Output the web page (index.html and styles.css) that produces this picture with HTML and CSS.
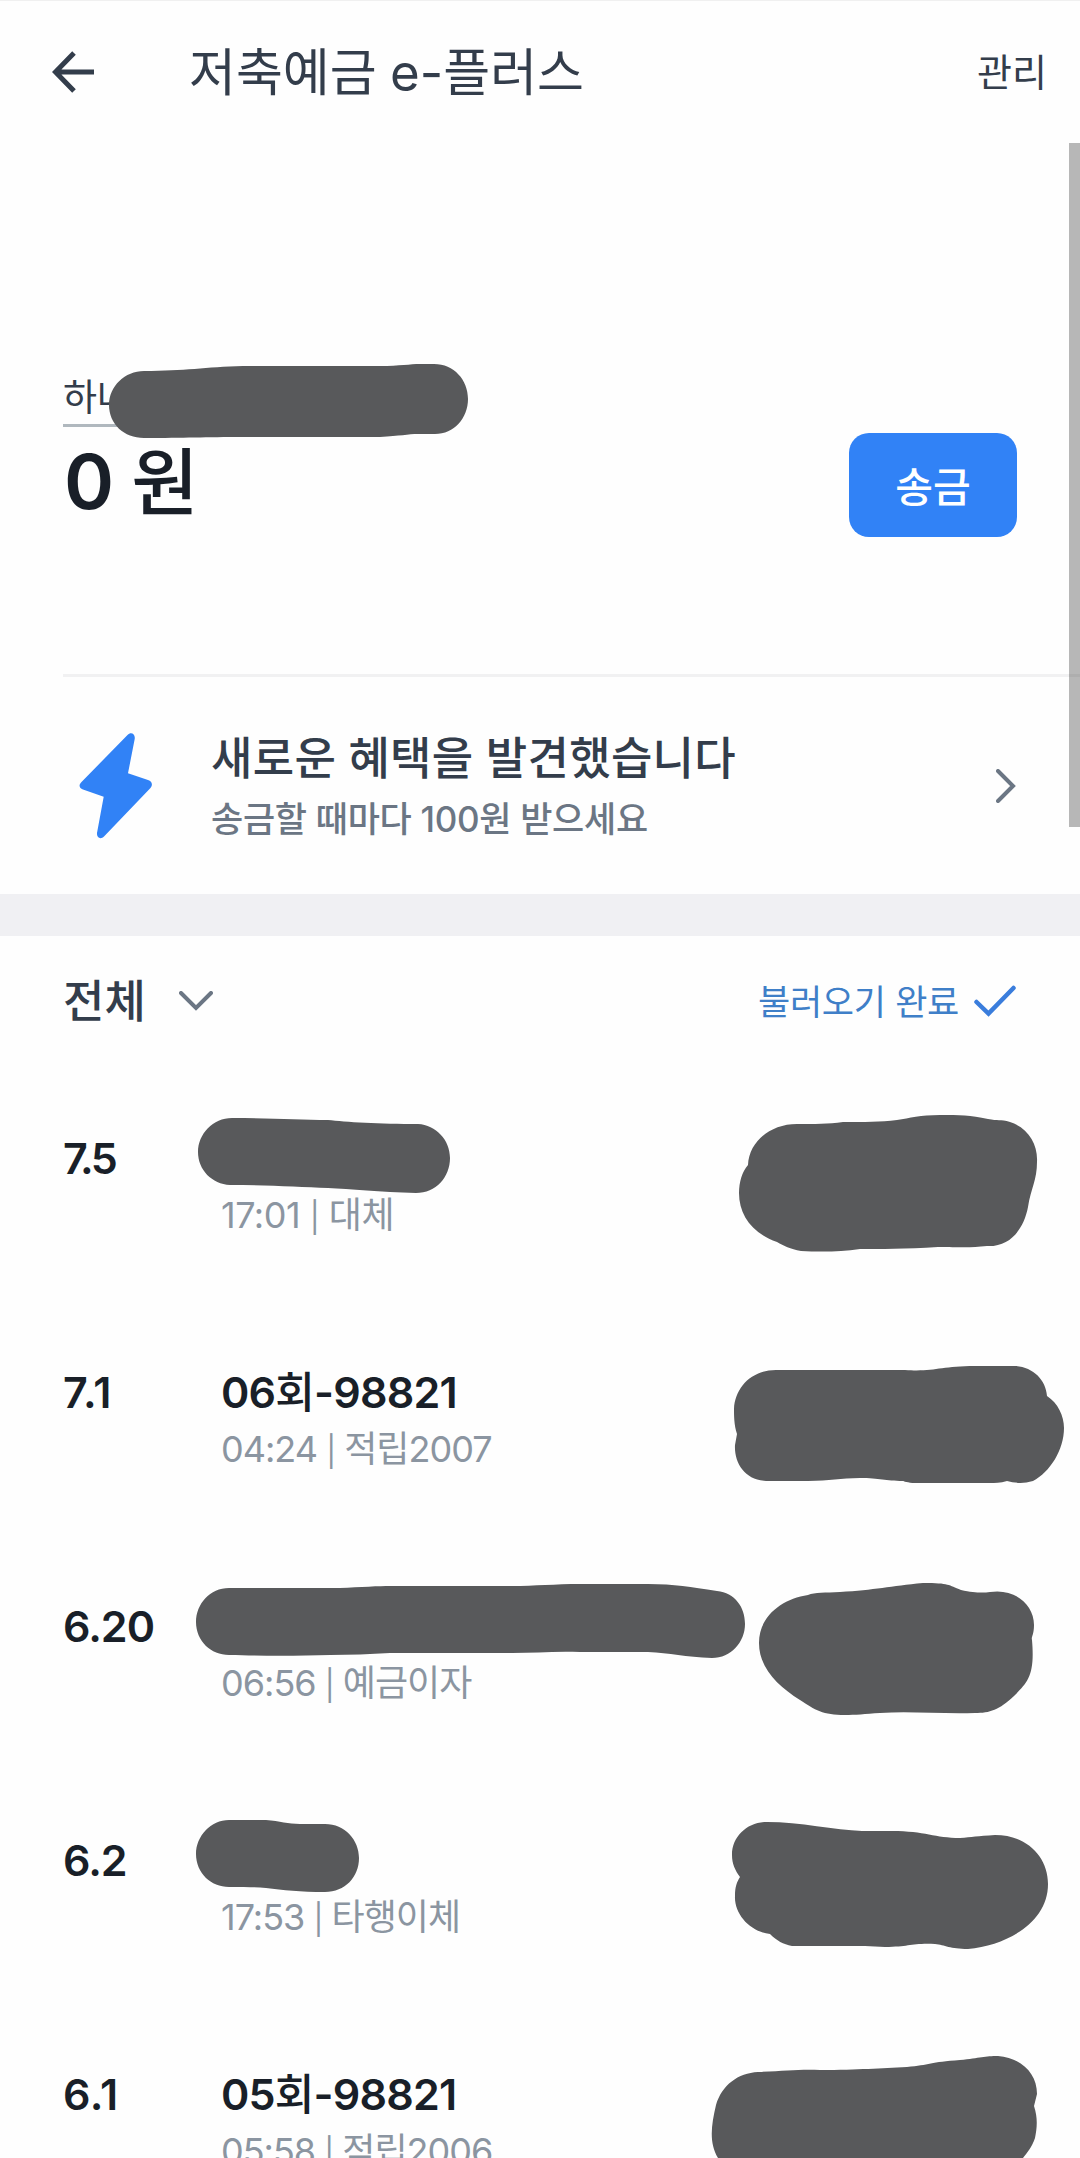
FILE: index.html
```html
<!DOCTYPE html>
<html lang="ko">

<head>
    <meta charset="UTF-8">
    <meta name="viewport" content="width=device-width, initial-scale=1.0">
    <title>저축예금 e-플러스</title>
    <link rel="stylesheet" href="styles.css">
</head>

<body>

    <header class="header">
        <svg class="back" width="42" height="42" viewBox="0 0 42 42">
            <path d="M22 2 L3.5 21 L22 40 M3.5 21 H42" />
        </svg>
        <h1 class="title">저축예금 e-플러스</h1>
        <a class="manage">관리</a>
    </header>

    <section class="account">
        <div>
            <div class="name">하나</div>
            <div class="amount">0 <span class="won">원</span></div>
        </div>
        <button class="send">송금</button>
    </section>

    <section class="benefit">
        <svg class="bolt" width="74" height="106" viewBox="0 0 74 106">
            <path d="M48.500 2 C52 -2 56.500 1 55.700 6 L49 40.300 L69 47 C73.500 48.500 74 52.500 71 55.500 L25 103.500 C21.500 107 17.500 104.500 18 100 L24.700 63.700 L4 56.500 C0 55 -0.500 52 2.500 49 Z" />
        </svg>
        <div class="benefit-text">
            <div class="benefit-title">새로운 혜택을 발견했습니다</div>
            <div class="benefit-sub">송금할 때마다 100원 받으세요</div>
        </div>
        <svg class="chevron" width="20" height="34" viewBox="0 0 20 34">
            <path d="M2 2 L17 17 L2 32" />
        </svg>
    </section>

    <div class="band"></div>

    <div class="toolbar">
        <div class="filter">
            <span>전체</span>
            <svg class="chevron" width="34" height="20" viewBox="0 0 34 20">
                <path d="M2 2 L17 17 L32 2" />
            </svg>
        </div>
        <div class="loaded">
            <span>불러오기 완료</span>
            <svg class="check" width="42" height="32" viewBox="0 0 42 32">
                <path d="M2.500 17 L14.500 28.500 L39.500 3" />
            </svg>
        </div>
    </div>

    <ul class="list">
        <li class="row">
            <div class="date kern">7.5</div>
            <div>
                <div class="memo"></div>
                <div class="detail short">17:01 <span class="bar">|</span> 대체</div>
            </div>
        </li>
        <li class="row">
            <div class="date wide">7.1</div>
            <div>
                <div class="memo">06<span class="ko">회</span>-98821</div>
                <div class="detail">04:24 <span class="bar">|</span> 적립2007</div>
            </div>
        </li>
        <li class="row">
            <div class="date">6.20</div>
            <div>
                <div class="memo"></div>
                <div class="detail">06:56 <span class="bar">|</span> 예금이자</div>
            </div>
        </li>
        <li class="row">
            <div class="date">6.2</div>
            <div>
                <div class="memo"></div>
                <div class="detail">17:53 <span class="bar">|</span> 타행이체</div>
            </div>
        </li>
        <li class="row">
            <div class="date wide">6.1</div>
            <div>
                <div class="memo">05<span class="ko">회</span>-98821</div>
                <div class="detail">05:58 <span class="bar">|</span> 적립2006</div>
            </div>
        </li>
    </ul>

    <!-- marcas que tapan los datos privados -->
    <svg class="marks" width="1080" height="2158" viewBox="0 0 1080 2158">
        <path d="M144 371 C185 371 205 367 243 366 H380 C400 366 410 364 420 364 H434 C454 364 468 380 468 399 C468 418 454 434 435 434 H418 C408 434 400 436 380 437 H243 C205 437 185 438 144 438 C124 438 109 424 109 405 C109 386 125 371 144 371 Z" />
        <path d="M232 1118 C270 1118 300 1120 328 1120 C345 1122 380 1124 418 1124 C436 1125 450 1140 450 1158 C450 1177 436 1193 416 1193 C380 1192 350 1189 328 1188 C300 1187 265 1185 230 1185 C212 1184 198 1170 198 1152 C198 1134 213 1118 232 1118 Z" />
        <path d="M229 1588 C270 1588 310 1588 340 1588 C360 1587 380 1586 390 1586 H512 C535 1586 555 1584 580 1584 H648 C675 1584 690 1587 717 1591 C735 1593 745 1607 745 1624 C745 1642 731 1658 712 1658 C685 1657 670 1653 648 1652 H580 C555 1651 535 1653 512 1653 H390 C370 1654 350 1655 330 1655 C300 1656 260 1656 229 1655 C211 1655 196 1641 196 1622 C196 1604 210 1588 229 1588 Z" />
        <path d="M229 1820 C250 1820 258 1820 266 1820 C280 1821 288 1824 300 1824 L325 1824 C345 1824 359 1840 359 1858 C359 1877 345 1892 325 1892 C300 1892 283 1890 266 1888 C255 1887 245 1887 229 1887 C211 1887 196 1873 196 1854 C196 1836 211 1820 229 1820 Z" />
        <path d="M748 1165 C749 1142 770 1124 797 1124 C815 1124 828 1124 843 1122 C865 1122 880 1122 897 1120 C910 1118 920 1115 940 1115 C960 1115 970 1115 988 1119 C998 1121 1000 1119 1010 1122 C1028 1128 1038 1144 1037 1162 C1037 1180 1031 1188 1028 1207 C1024 1228 1011 1247 987 1246 C970 1248 960 1247 938 1247 C905 1249 880 1249 860 1249 C840 1252 820 1252 801 1251 C790 1249 784 1246 777 1242 C752 1233 739 1215 739 1193 C739 1182 742 1172 748 1165 Z" />
        <path d="M776 1370 H905 C935 1372 940 1366 975 1366 H1015 C1033 1367 1046 1380 1047 1396 C1058 1403 1064 1416 1064 1428 C1064 1450 1050 1472 1033 1481 C1023 1484 1015 1483 1007 1481 C1000 1483 995 1483 990 1483 H915 C908 1483 903 1481 903 1481 C885 1481 880 1478 860 1478 C840 1478 830 1481 808 1481 H766 C745 1480 734 1463 735 1445 L737 1434 C734 1425 734 1415 734 1409 C735 1387 752 1370 776 1370 Z" />
        <path d="M808 1595 C815 1592 825 1593 840 1592 C875 1590 890 1586 923 1583 C950 1583 948 1585 961 1590 C975 1593 983 1593 990 1592 C1014 1588 1034 1604 1034 1625 C1034 1635 1031 1637 1032 1640 C1035 1675 1028 1682 1014 1696 C999 1710 990 1713 975 1713 C940 1714 910 1711 880 1713 C865 1714 855 1715 845 1715 C823 1715 815 1710 800 1700 C778 1686 759 1668 759 1643 C759 1616 782 1599 808 1595 Z" />
        <path d="M767 1822 C800 1822 835 1830 862 1831 H892 C925 1831 935 1838 960 1838 C972 1837 977 1836 995 1835 C1027 1835 1048 1857 1048 1884 C1048 1922 1008 1945 968 1949 C950 1949 945 1945 935 1944 C910 1943 910 1947 885 1947 L865 1946 H792 C783 1944 777 1941 770 1934 C750 1932 734 1914 735 1896 C735 1886 737 1882 740 1877 C735 1870 732 1864 732 1855 C732 1836 748 1822 767 1822 Z" />
        <path d="M718 2158 C709 2143 711 2126 716 2105 C722 2085 738 2073 758 2072 C785 2071 800 2069 820 2070 C860 2070 880 2068 907 2067 C930 2065 930 2062 960 2060 C980 2058 985 2056 998 2056 C1022 2058 1037 2074 1037 2094 L1034 2106 C1038 2118 1037 2128 1035 2138 C1032 2147 1027 2153 1023 2158 Z" />
    </svg>

    <div class="scrollbar"></div>

</body>

</html>
```

FILE: styles.css
```css
* {
    box-sizing: border-box;
}

body {
    margin: 0;
    height: 2158px;
    overflow: hidden;
    position: relative; /* Para las marcas y la barra de scroll */
    background-color: #fefefe;
    color: #333d4b;
    font-family: Inter, "Noto Sans CJK KR", sans-serif;
}

svg {
    flex-shrink: 0;
}

path {
    stroke-linecap: round;
}

.header {
    display: flex;
    align-items: center;
    height: 143px;
    padding: 0 33px 0 52px;
    border-top: 1px solid #f0f0f0;
}

.back path {
    fill: none;
    stroke: #333d4b;
    stroke-width: 5;
    stroke-linecap: butt;
}

.title {
    flex: 1;
    margin: 2px 0 0 95px;
    font-size: 51px;
    font-weight: 400;
    line-height: 60px;
    word-spacing: -1px;
}

.manage {
    font-size: 38px;
    line-height: 50px;
}

.account {
    display: flex;
    justify-content: space-between;
    align-items: flex-end;
    height: 531px;
    padding: 0 63px 137px 63px;
}

.name {
    width: 392px;
    padding-top: 2px;
    border-bottom: 3px solid #b0b8be;
    font-size: 37px;
    line-height: 52px;
}

.amount {
    padding-left: 1px;
    color: #191f28;
    font-size: 76px;
    font-weight: 600;
    line-height: 109px;
    letter-spacing: -1px;
}

.won {
    font-size: 73px;
    font-weight: 500;
}

.send {
    width: 168px;
    height: 104px;
    padding: 0 0 3px;
    border: 0;
    border-radius: 20px;
    background-color: #3182f6;
    color: white;
    font-family: inherit;
    font-size: 41px;
    font-weight: 500;
}

.benefit {
    display: flex;
    align-items: center;
    height: 220px;
    margin-left: 63px;
    padding: 0 64px 0 16px;
    border-top: 3px solid #f1f1f2;
}

.bolt path {
    fill: #3182f6;
}

.benefit-text {
    flex: 1;
    margin: 8px 0 0 58px;
}

.benefit-title {
    font-size: 45px;
    font-weight: 500;
    line-height: 60px;
    letter-spacing: 0.3px;
}

.benefit-sub {
    color: #6b7684;
    font-size: 35px;
    font-weight: 500;
    line-height: 61px;
    letter-spacing: -0.3px;
}

.chevron path {
    fill: none;
    stroke: #6b7684;
    stroke-width: 4;
}

.band {
    height: 42px;
    background-color: #f0f0f3;
}

.toolbar {
    display: flex;
    justify-content: space-between;
    align-items: center;
    height: 130px;
    padding: 0 64px 0 63px;
}

.filter {
    display: flex;
    align-items: center;
    gap: 33px;
    font-size: 45px;
    font-weight: 500;
}

.filter span {
    margin-top: -6px;
}

.loaded {
    display: flex;
    align-items: center;
    gap: 15px;
    color: #3f7fc8;
    font-size: 35px;
    letter-spacing: -0.3px;
}

.loaded span {
    margin-top: -3px;
}

.check path {
    fill: none;
    stroke: #3a7ddc;
    stroke-width: 4.5;
}

.list {
    margin: 0;
    padding: 30px 0 0 63px;
    list-style: none;
}

.row {
    display: grid;
    grid-template-columns: 157px 1fr;
    height: 234px;
    padding-top: 34px;
}

.date,
.memo {
    height: 57px;
    color: #191f28;
    font-size: 43px;
    font-weight: 600;
    line-height: 56px;
    letter-spacing: -1px;
}

.memo {
    padding-left: 1px;
    letter-spacing: -0.8px;
}

.ko {
    font-weight: 500;
}

.kern {
    letter-spacing: -2.5px;
}

.wide {
    letter-spacing: 0.5px;
}

.detail {
    padding-left: 1px;
    color: #8b95a1;
    font-size: 36px;
    line-height: 56px;
    letter-spacing: -1px;
}

.short {
    letter-spacing: -0.5px;
}

.bar {
    font-size: 30px;
}

.marks {
    position: absolute;
    top: 0;
    left: 0;
    fill: #58595b;
}

.scrollbar {
    position: absolute;
    top: 143px;
    right: 0;
    width: 11px;
    height: 684px;
    background-color: rgba(0, 0, 0, 0.28);
}
```
